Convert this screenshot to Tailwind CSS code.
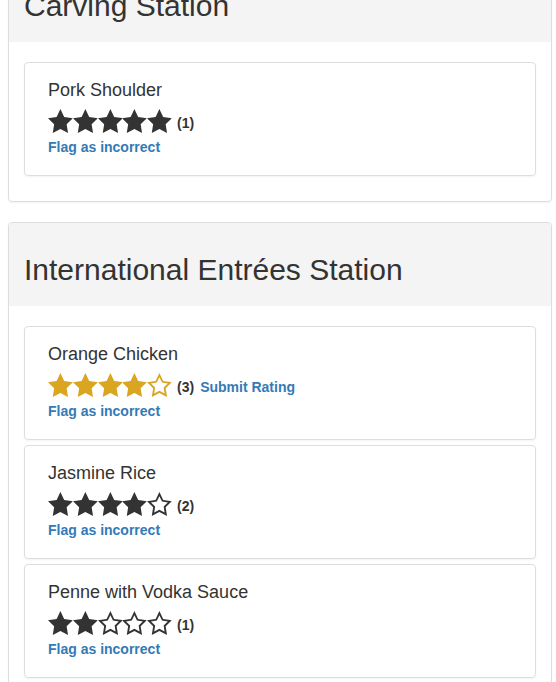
<!DOCTYPE html>
<html lang="en">
<head>
    <meta charset="UTF-8">
    <meta name="viewport" content="width=device-width, initial-scale=1.0">
    <title>Menu Ratings</title>
    <script src="https://cdn.jsdelivr.net/npm/@tailwindcss/browser@4"></script>
</head>
<body class="h-screen overflow-hidden bg-white pl-2 pr-1 font-['Liberation_Sans',Arial,sans-serif] text-sm leading-5 text-[#333333]">

    <!-- Star shapes -->
    <svg class="hidden">
        <symbol id="star" viewBox="0 0 25 24">
            <path fill="currentColor" d="M12.5 0 L16.3 8 L25 9.2 L18.8 15.3 L20.2 24 L12.5 20 L4.8 24 L6.2 15.3 L0 9.2 L8.7 8 Z"/>
        </symbol>
        <symbol id="star-empty" viewBox="0 0 25 24">
            <path fill="currentColor" fill-rule="evenodd" d="M12.5 0 L16.3 8 L25 9.2 L18.8 15.3 L20.2 24 L12.5 20 L4.8 24 L6.2 15.3 L0 9.2 L8.7 8 Z M12.5 4.2 L9.9 9.6 L4 10.4 L8.2 14.6 L7.3 20.5 L12.5 17.8 L17.7 20.5 L16.8 14.6 L21 10.4 L15.1 9.6 Z"/>
        </symbol>
    </svg>

    <main class="-mt-[42px]">
        <!-- Carving -->
        <section class="mb-5 rounded border border-[#dddddd] shadow-xs">
            <div class="rounded-t bg-[#f4f4f4] px-[15px] pt-[30px] pb-5">
                <h2 class="text-[30px] leading-[33px]">Carving Station</h2>
            </div>
            <div class="px-[15px] pt-5 pb-[25px]">
                <article class="h-[114px] rounded border border-[#dddddd] px-[23px] pt-[17px] shadow-xs">
                    <h3 class="text-lg leading-5">Pork Shoulder</h3>
                    <div class="mt-[9px] flex h-7 items-start font-bold">
                        <span class="flex w-[124px]" role="img" aria-label="5 of 5 stars">
                            <svg class="h-6 flex-1"><use href="#star"/></svg>
                            <svg class="h-6 flex-1"><use href="#star"/></svg>
                            <svg class="h-6 flex-1"><use href="#star"/></svg>
                            <svg class="h-6 flex-1"><use href="#star"/></svg>
                            <svg class="h-6 flex-1"><use href="#star"/></svg>
                        </span>
                        <span class="mt-1 ml-[5px]">(1)</span>
                    </div>
                    <a href="#" class="block font-bold text-[#337ab7]">Flag as incorrect</a>
                </article>
            </div>
        </section>

        <!-- International Entrées -->
        <section class="rounded border border-[#dddddd] shadow-xs">
            <div class="rounded-t bg-[#f4f4f4] px-[15px] pt-[30px] pb-5">
                <h2 class="text-[30px] leading-[33px]">International Entrées Station</h2>
            </div>
            <div class="space-y-[5px] px-[15px] pt-5 pb-[25px]">
                <article class="h-[114px] rounded border border-[#dddddd] px-[23px] pt-[17px] shadow-xs">
                    <h3 class="text-lg leading-5">Orange Chicken</h3>
                    <div class="mt-[9px] flex h-7 items-start font-bold">
                        <span class="flex w-[124px] text-[#daa520]" role="img" aria-label="4 of 5 stars">
                            <svg class="h-6 flex-1"><use href="#star"/></svg>
                            <svg class="h-6 flex-1"><use href="#star"/></svg>
                            <svg class="h-6 flex-1"><use href="#star"/></svg>
                            <svg class="h-6 flex-1"><use href="#star"/></svg>
                            <svg class="h-6 flex-1"><use href="#star-empty"/></svg>
                        </span>
                        <span class="mt-1 ml-[5px]">(3)</span>
                        <a href="#" class="mt-1 ml-[6px] text-[#337ab7]">Submit Rating</a>
                    </div>
                    <a href="#" class="block font-bold text-[#337ab7]">Flag as incorrect</a>
                </article>

                <article class="h-[114px] rounded border border-[#dddddd] px-[23px] pt-[17px] shadow-xs">
                    <h3 class="text-lg leading-5">Jasmine Rice</h3>
                    <div class="mt-[9px] flex h-7 items-start font-bold">
                        <span class="flex w-[124px]" role="img" aria-label="4 of 5 stars">
                            <svg class="h-6 flex-1"><use href="#star"/></svg>
                            <svg class="h-6 flex-1"><use href="#star"/></svg>
                            <svg class="h-6 flex-1"><use href="#star"/></svg>
                            <svg class="h-6 flex-1"><use href="#star"/></svg>
                            <svg class="h-6 flex-1"><use href="#star-empty"/></svg>
                        </span>
                        <span class="mt-1 ml-[5px]">(2)</span>
                    </div>
                    <a href="#" class="block font-bold text-[#337ab7]">Flag as incorrect</a>
                </article>

                <article class="h-[114px] rounded border border-[#dddddd] px-[23px] pt-[17px] shadow-xs">
                    <h3 class="text-lg leading-5">Penne with Vodka Sauce</h3>
                    <div class="mt-[9px] flex h-7 items-start font-bold">
                        <span class="flex w-[124px]" role="img" aria-label="2 of 5 stars">
                            <svg class="h-6 flex-1"><use href="#star"/></svg>
                            <svg class="h-6 flex-1"><use href="#star"/></svg>
                            <svg class="h-6 flex-1"><use href="#star-empty"/></svg>
                            <svg class="h-6 flex-1"><use href="#star-empty"/></svg>
                            <svg class="h-6 flex-1"><use href="#star-empty"/></svg>
                        </span>
                        <span class="mt-1 ml-[5px]">(1)</span>
                    </div>
                    <a href="#" class="block font-bold text-[#337ab7]">Flag as incorrect</a>
                </article>
            </div>
        </section>
    </main>

</body>
</html>
